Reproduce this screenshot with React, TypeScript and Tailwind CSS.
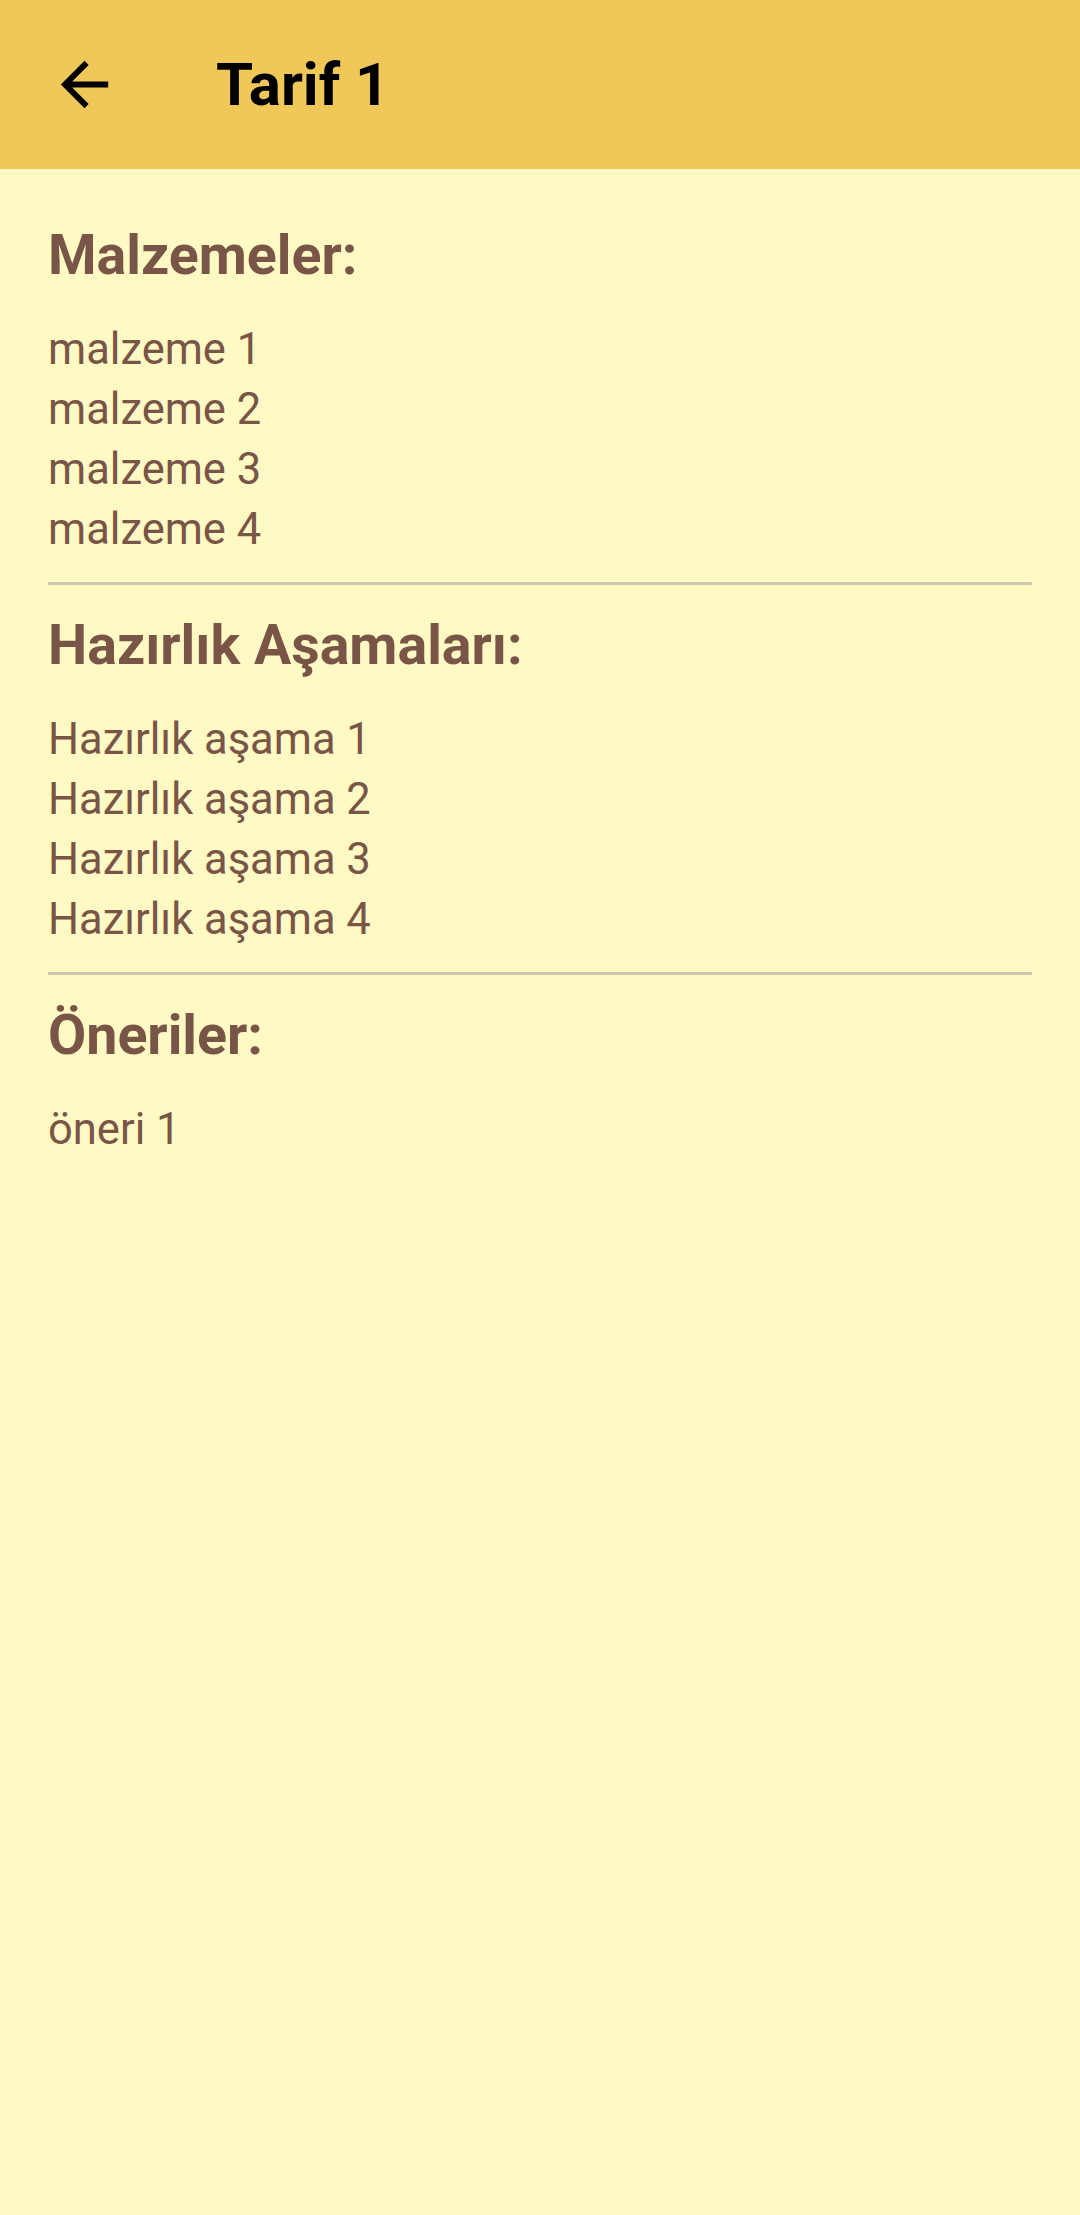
const sections = [
  { title: "Malzemeler:", items: ["malzeme 1", "malzeme 2", "malzeme 3", "malzeme 4"] },
  {
    title: "Hazırlık Aşamaları:",
    items: ["Hazırlık aşama 1", "Hazırlık aşama 2", "Hazırlık aşama 3", "Hazırlık aşama 4"],
  },
  { title: "Öneriler:", items: ["öneri 1"] },
]

function BackArrow() {
  return (
    <svg viewBox="0 0 24 24" className="w-[71px] h-[71px]" fill="#000">
      <path d="M20 11H7.83l5.59-5.59L12 4l-8 8 8 8 1.41-1.41L7.83 13H20v-2z" />
    </svg>
  )
}

export default function App() {
  return (
    <div
      className="w-[1080px] h-[2215px] bg-[#fff9c4] flex flex-col"
      style={{ fontFamily: "Roboto, 'Noto Sans', sans-serif" }}
    >
      {/* App bar */}
      <div className="h-[169px] bg-[#f0c85a] flex items-center shrink-0">
        <button className="ml-[49px]">
          <BackArrow />
        </button>
        <h1 className="ml-[96px] text-[60px] leading-[72px] font-bold text-black">Tarif 1</h1>
      </div>

      {/* Content */}
      <div className="px-[48px] pt-[53px]">
        {sections.map((s, i) => (
          <div key={s.title}>
            <h2 className="text-[55.5px] leading-[67px] font-bold text-[#795548]">{s.title}</h2>
            <ul className="mt-[31px]">
              {s.items.map((item) => (
                <li key={item} className="text-[43.5px] leading-[60px] text-[#795548]">
                  {item}
                </li>
              ))}
            </ul>
            {i < sections.length - 1 && (
              <div className="mt-[22px] mb-[27px] h-[3px] bg-[#cdc7b3]" />
            )}
          </div>
        ))}
      </div>
    </div>
  )
}
